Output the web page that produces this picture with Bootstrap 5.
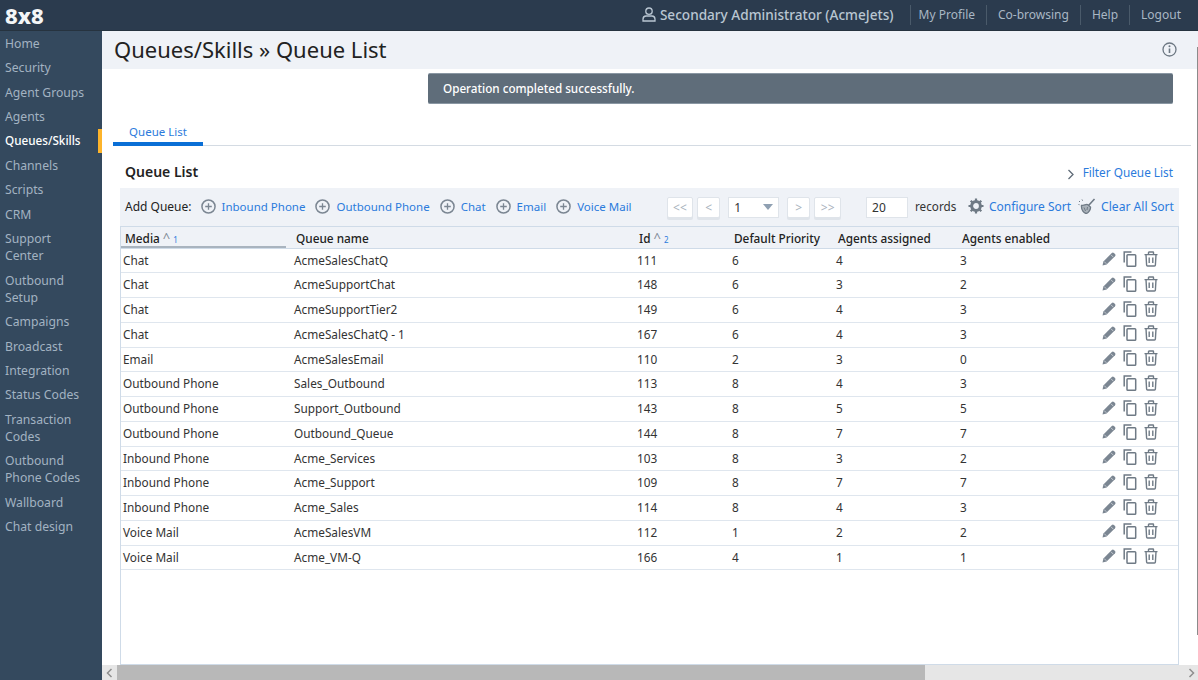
<!DOCTYPE html>
<html lang="en">

<head>
    <meta charset="UTF-8">
    <title>Queue List</title>
    <meta name="viewport" content="width=device-width, initial-scale=1">
    <link href="https://cdn.jsdelivr.net/npm/bootstrap@5.3.3/dist/css/bootstrap.min.css" rel="stylesheet">
    <style>
        html, body { height: 100%; overflow: hidden; }
        body { font-family: "Noto Sans", "Liberation Sans", sans-serif; font-size: 12px; color: #333; background: #fff; }
        a { text-decoration: none; color: #2b7bdc; }
        .shell { height: 680px; }
        .top-bar { height: 31px; padding: 0 17px 0 5px; background: #2b3b4e; border-bottom: 1px solid #26333f; }
        .logo-text { color: #f4f6f8; font-size: 22px; font-weight: 800; line-height: 30px; }
        .user-name { color: #b9c6d2; font-size: 13.6px; font-weight: 500; margin-right: 16px; }
        .top-link { color: #a9b7c4; font-size: 12px; padding: 0 11px; height: 20px; line-height: 20px; border-left: 1px solid #4a5a6a; }
        .top-link:first-of-type { padding-left: 8px; }
        .top-link:last-child { padding-right: 0; }
        .side-bar { width: 102px; flex: none; background: #34495e; }
        .side-link { display: block; color: #a3b3c2; font-size: 12.2px; line-height: 17px; padding: 3.72px 12px 3.72px 5px; }
        .side-link.current { color: #fff; font-size: 11.7px; font-weight: 500; padding-right: 0; border-right: 4px solid #fdb42b; }
        .title-bar { height: 38px; padding: 0 22px 2px 12px; background: #eff2f7; }
        .title-bar h1 { font-size: 22px; font-weight: 400; color: #222; margin: 0; }
        .work-area { min-height: 0; }
        .ok-alert { margin: 4px 26px 0 326px; height: 31px; padding: 0 15px; line-height: 28px; border: 0; border-top: 1px solid #8a97a3; border-bottom: 1px solid #8a97a3; border-radius: 2px; background: #5f6d7a; color: #fff; font-weight: 500; font-size: 11.7px; }
        .tab-row { margin: 21px 8px 0 11px; height: 21px; border-bottom: 1px solid #d4dbe3; }
        .tab-item { width: 90px; height: 21px; line-height: 14px; text-align: center; color: #2b7bdc; font-size: 11.5px; border-bottom: 4px solid #0a6fd6; }
        .list-head { margin: 16px 24px 0 23px; height: 26px; padding-bottom: 6px; }
        .list-head h2 { font-size: 14px; font-weight: 600; color: #222; margin: 0; }
        .filter-link { font-size: 11.8px; margin-right: 2px; position: relative; top: 1px; }
        .tool-bar { margin: 0 20px 0 18px; height: 38px; padding: 0 5px 0 5px; background: #eff2f7; white-space: nowrap; }
        .tool-label { color: #222; margin-right: 9px; }
        .tool-link { margin-right: 10px; font-size: 11.5px; }
        .tool-link svg { margin-right: 6px; vertical-align: -3px; }
        .pager { margin-left: 25px; }
        .page-btn { min-width: 23px; height: 21px; padding: 0 5.5px; font-size: 12px; line-height: 19px; color: #a8b2bc; background: #fff; border: 1px solid #dfe4ea; border-radius: 2px; box-shadow: 0 2px 0 #dfe4ea; }
        .page-pick { width: 51px; height: 21px; padding: 0 5px; line-height: 19px; background: #fff; border: 1px solid #dfe4ea; color: #333; }
        .page-pick i { border: 5px solid transparent; border-top: 6px solid #8fa0b2; border-bottom: 0; }
        .count-box { width: 42px; height: 21px; margin-left: 25px; margin-right: 7px; padding: 0 5px; font-size: 12px; line-height: 19px; border: 1px solid #dfe4ea; border-radius: 0; color: #333; }
        .count-label { font-size: 11.7px; }
        .side-tool svg { margin-right: 5px; vertical-align: -3px; }
        .clear-tool { font-size: 12.1px; margin-left: 7px; }
        .table-box { margin: 0 20px 0 18px; border: 1px solid #cfdbe8; overflow: hidden; }
        .queue-table { table-layout: fixed; width: 1057px; margin: 0; font-size: 11.8px; }
        .queue-table th { height: 21px; padding: 2px 0 0 4px; background: #eff2f7; color: #222; font-weight: 500; font-size: 11.8px; line-height: 16px; border-bottom: 1px solid #cfdbe8; vertical-align: middle; white-space: nowrap; }
        .queue-table td { height: 24.75px; padding: 0 0 0 2px; color: #333; border-bottom: 1px solid #dfe6ee; vertical-align: middle; white-space: nowrap; }
        .queue-table th.sort-on { box-shadow: inset -6px 0 0 #eff2f7, inset 0 -2px 0 #a9b4bf; }
        .sort-mark { color: #7f8b98; font-weight: 400; font-size: 13px; line-height: 12px; margin-left: 3px; position: relative; top: -1px; }
        .sort-num { color: #2b7bdc; font-weight: 400; font-size: 8px; line-height: 12px; margin-left: 3px; }
        .queue-table td.row-tools { padding-left: 10px; }
        .row-tools svg { margin-right: 5px; vertical-align: -2px; }
        .h-scroll { height: 15px; background: #e6e6e6; }
        .h-scroll b { width: 808px; height: 15px; background: #b8b8b8; }
        .scroll-end { width: 15px; color: #8e8e8e; }
        .v-thumb { position: absolute; right: 0; top: 47px; width: 1px; height: 588px; background: #8b8b8b; }
    </style>
</head>

<body>
    <svg width="0" height="0" class="position-absolute">
        <symbol id="ic-plus" viewBox="0 0 16 16"><circle cx="8" cy="8" r="7" fill="none" stroke="#7b8692" stroke-width="1.6"/><path d="M8 4.500v7M4.500 8h7" stroke="#7b8692" stroke-width="1.400"/></symbol>
        <symbol id="ic-pen" viewBox="0 0 16 16"><path d="M1.500 14.500l.9-4.100L10.800 2a1.500 1.500 0 0 1 2.100 0l1.100 1.100a1.500 1.500 0 0 1 0 2.100l-8.400 8.400z" fill="#7b8692"/><path d="M3.200 10.600l2.200 2.200M10 3.800l2.200 2.200" stroke="#d5dae0" stroke-width=".8"/></symbol>
        <symbol id="ic-copy" viewBox="0 0 16 16"><path d="M2.200 11.500V1h7.300" fill="none" stroke="#6f7a85" stroke-width="1.500"/><rect x="5" y="3.800" width="8.700" height="11.400" rx=".8" fill="none" stroke="#6f7a85" stroke-width="1.500"/></symbol>
        <symbol id="ic-trash" viewBox="0 0 16 16"><path d="M1.500 3.600h13M5.500 3.400V1.500c0-.3.2-.5.5-.5h4c.3 0 .5.2.5.5v1.900M3 3.800l.6 10.200c0 .6.4 1 1 1h6.800c.6 0 1-.4 1-1l.6-10.200M6.200 6.500v5.500M9.800 6.500v5.500" fill="none" stroke="#6f7a85" stroke-width="1.400"/></symbol>
    </svg>

    <div class="shell d-flex flex-column position-relative">
        <nav class="navbar top-bar flex-nowrap">
            <span class="logo-text">8x8</span>
            <div class="d-flex align-items-center">
                <svg width="14" height="15" viewBox="0 0 14 15" class="me-1"><circle cx="7" cy="4.200" r="3.200" fill="none" stroke="#b9c6d2" stroke-width="1.300"/><path d="M1 14v-1.800C1 10 2.600 9 4 9h6c1.400 0 3 1 3 3.200V14z" fill="none" stroke="#b9c6d2" stroke-width="1.300"/></svg>
                <span class="user-name">Secondary Administrator (AcmeJets)</span>
                <a class="top-link" href="#">My Profile</a>
                <a class="top-link" href="#">Co-browsing</a>
                <a class="top-link" href="#">Help</a>
                <a class="top-link" href="#">Logout</a>
            </div>
        </nav>

        <div class="d-flex flex-grow-1 work-area">
            <div class="side-bar">
                <a class="side-link" href="#">Home</a>
                <a class="side-link" href="#">Security</a>
                <a class="side-link" href="#">Agent Groups</a>
                <a class="side-link" href="#">Agents</a>
                <a class="side-link current" href="#">Queues/Skills</a>
                <a class="side-link" href="#">Channels</a>
                <a class="side-link" href="#">Scripts</a>
                <a class="side-link" href="#">CRM</a>
                <a class="side-link" href="#">Support Center</a>
                <a class="side-link" href="#">Outbound Setup</a>
                <a class="side-link" href="#">Campaigns</a>
                <a class="side-link" href="#">Broadcast</a>
                <a class="side-link" href="#">Integration</a>
                <a class="side-link" href="#">Status Codes</a>
                <a class="side-link" href="#">Transaction Codes</a>
                <a class="side-link" href="#">Outbound Phone Codes</a>
                <a class="side-link" href="#">Wallboard</a>
                <a class="side-link" href="#">Chat design</a>
            </div>

            <div class="d-flex flex-column flex-grow-1 work-area">
                <div class="title-bar d-flex justify-content-between align-items-center">
                    <h1>Queues/Skills » Queue List</h1>
                    <svg width="15" height="15" viewBox="0 0 15 15"><circle cx="7.500" cy="7.500" r="6.500" fill="none" stroke="#6d7883" stroke-width="1.300"/><path d="M7.500 6.500v4.500" stroke="#6d7883" stroke-width="1.600"/><circle cx="7.500" cy="4.300" r="1" fill="#6d7883"/></svg>
                </div>

                <div class="alert ok-alert" role="alert">Operation completed successfully.</div>

                <div class="tab-row d-flex"><div class="tab-item">Queue List</div></div>

                <div class="list-head d-flex justify-content-between align-items-center">
                    <h2>Queue List</h2>
                    <a class="filter-link" href="#"><svg width="8" height="11" viewBox="0 0 8 11" class="me-2"><path d="M1.500 1l4.500 4.500L1.500 10" fill="none" stroke="#5f6b77" stroke-width="1.300"/></svg>Filter Queue List</a>
                </div>

                <div class="tool-bar d-flex align-items-center">
                    <span class="tool-label">Add Queue:</span>
                    <a class="tool-link" href="#"><svg width="15" height="15"><use href="#ic-plus"/></svg>Inbound Phone</a>
                    <a class="tool-link" href="#"><svg width="15" height="15"><use href="#ic-plus"/></svg>Outbound Phone</a>
                    <a class="tool-link" href="#"><svg width="15" height="15"><use href="#ic-plus"/></svg>Chat</a>
                    <a class="tool-link" href="#"><svg width="15" height="15"><use href="#ic-plus"/></svg>Email</a>
                    <a class="tool-link" href="#"><svg width="15" height="15"><use href="#ic-plus"/></svg>Voice Mail</a>
                    <div class="pager d-flex align-items-center gap-1">
                        <button class="page-btn" type="button">&lt;&lt;</button>
                        <button class="page-btn" type="button">&lt;</button>
                        <div class="page-pick d-flex justify-content-between align-items-center mx-1"><span>1</span><i></i></div>
                        <button class="page-btn" type="button">&gt;</button>
                        <button class="page-btn" type="button">&gt;&gt;</button>
                    </div>
                    <input class="form-control count-box" value="20">
                    <span class="count-label">records</span>
                    <a class="side-tool ms-auto" href="#"><svg width="16" height="16" viewBox="0 0 16 16"><circle cx="8" cy="8" r="4.400" fill="none" stroke="#6f7a85" stroke-width="3"/><path d="M8 .5v3M8 12.500v3M.5 8h3M12.500 8h3M2.700 2.700l2.100 2.100M11.200 11.200l2.100 2.100M13.300 2.700l-2.100 2.100M4.800 11.200l-2.100 2.100" stroke="#6f7a85" stroke-width="2.200"/><circle cx="8" cy="8" r="1.500" fill="none" stroke="#eff2f7" stroke-width=".7"/></svg>Configure Sort</a>
                    <a class="side-tool clear-tool" href="#"><svg width="18" height="16" viewBox="0 0 18 16"><path d="M3.500 7.500c2.500 0 4.500-1.500 6-1l3 2.500c.3 2-1.500 5.500-4 6.500-2.500 0-5.500-3.500-5-8z" fill="#aab2ba" stroke="#6f7a85" stroke-width="1.300"/><path d="M16.500 1L10.500 7.500" stroke="#6f7a85" stroke-width="1.600"/><path d="M1 3l1 1M4 1.500l.6 1.200M.5 6.500l1 .2M6 9.500l1.500 3.500M9.500 9l-.5 3" stroke="#6f7a85" stroke-width="1"/></svg>Clear All Sort</a>
                </div>

                <div class="table-box flex-grow-1">
                    <table class="table queue-table">
                        <colgroup><col style="width:171px"><col style="width:343px"><col style="width:95px"><col style="width:104px"><col style="width:124px"><col style="width:133px"><col></colgroup>
                        <thead>
                            <tr><th class="sort-on">Media<span class="sort-mark">^</span><span class="sort-num">1</span></th><th>Queue name</th><th>Id<span class="sort-mark">^</span><span class="sort-num">2</span></th><th>Default Priority</th><th>Agents assigned</th><th>Agents enabled</th><th></th></tr>
                        </thead>
                        <tbody>
                            <tr><td>Chat</td><td>AcmeSalesChatQ</td><td>111</td><td>6</td><td>4</td><td>3</td><td class="row-tools"><svg width="16" height="16"><use href="#ic-pen"/></svg><svg width="16" height="16"><use href="#ic-copy"/></svg><svg width="16" height="16"><use href="#ic-trash"/></svg></td></tr>
                            <tr><td>Chat</td><td>AcmeSupportChat</td><td>148</td><td>6</td><td>3</td><td>2</td><td class="row-tools"><svg width="16" height="16"><use href="#ic-pen"/></svg><svg width="16" height="16"><use href="#ic-copy"/></svg><svg width="16" height="16"><use href="#ic-trash"/></svg></td></tr>
                            <tr><td>Chat</td><td>AcmeSupportTier2</td><td>149</td><td>6</td><td>4</td><td>3</td><td class="row-tools"><svg width="16" height="16"><use href="#ic-pen"/></svg><svg width="16" height="16"><use href="#ic-copy"/></svg><svg width="16" height="16"><use href="#ic-trash"/></svg></td></tr>
                            <tr><td>Chat</td><td>AcmeSalesChatQ - 1</td><td>167</td><td>6</td><td>4</td><td>3</td><td class="row-tools"><svg width="16" height="16"><use href="#ic-pen"/></svg><svg width="16" height="16"><use href="#ic-copy"/></svg><svg width="16" height="16"><use href="#ic-trash"/></svg></td></tr>
                            <tr><td>Email</td><td>AcmeSalesEmail</td><td>110</td><td>2</td><td>3</td><td>0</td><td class="row-tools"><svg width="16" height="16"><use href="#ic-pen"/></svg><svg width="16" height="16"><use href="#ic-copy"/></svg><svg width="16" height="16"><use href="#ic-trash"/></svg></td></tr>
                            <tr><td>Outbound Phone</td><td>Sales_Outbound</td><td>113</td><td>8</td><td>4</td><td>3</td><td class="row-tools"><svg width="16" height="16"><use href="#ic-pen"/></svg><svg width="16" height="16"><use href="#ic-copy"/></svg><svg width="16" height="16"><use href="#ic-trash"/></svg></td></tr>
                            <tr><td>Outbound Phone</td><td>Support_Outbound</td><td>143</td><td>8</td><td>5</td><td>5</td><td class="row-tools"><svg width="16" height="16"><use href="#ic-pen"/></svg><svg width="16" height="16"><use href="#ic-copy"/></svg><svg width="16" height="16"><use href="#ic-trash"/></svg></td></tr>
                            <tr><td>Outbound Phone</td><td>Outbound_Queue</td><td>144</td><td>8</td><td>7</td><td>7</td><td class="row-tools"><svg width="16" height="16"><use href="#ic-pen"/></svg><svg width="16" height="16"><use href="#ic-copy"/></svg><svg width="16" height="16"><use href="#ic-trash"/></svg></td></tr>
                            <tr><td>Inbound Phone</td><td>Acme_Services</td><td>103</td><td>8</td><td>3</td><td>2</td><td class="row-tools"><svg width="16" height="16"><use href="#ic-pen"/></svg><svg width="16" height="16"><use href="#ic-copy"/></svg><svg width="16" height="16"><use href="#ic-trash"/></svg></td></tr>
                            <tr><td>Inbound Phone</td><td>Acme_Support</td><td>109</td><td>8</td><td>7</td><td>7</td><td class="row-tools"><svg width="16" height="16"><use href="#ic-pen"/></svg><svg width="16" height="16"><use href="#ic-copy"/></svg><svg width="16" height="16"><use href="#ic-trash"/></svg></td></tr>
                            <tr><td>Inbound Phone</td><td>Acme_Sales</td><td>114</td><td>8</td><td>4</td><td>3</td><td class="row-tools"><svg width="16" height="16"><use href="#ic-pen"/></svg><svg width="16" height="16"><use href="#ic-copy"/></svg><svg width="16" height="16"><use href="#ic-trash"/></svg></td></tr>
                            <tr><td>Voice Mail</td><td>AcmeSalesVM</td><td>112</td><td>1</td><td>2</td><td>2</td><td class="row-tools"><svg width="16" height="16"><use href="#ic-pen"/></svg><svg width="16" height="16"><use href="#ic-copy"/></svg><svg width="16" height="16"><use href="#ic-trash"/></svg></td></tr>
                            <tr><td>Voice Mail</td><td>Acme_VM-Q</td><td>166</td><td>4</td><td>1</td><td>1</td><td class="row-tools"><svg width="16" height="16"><use href="#ic-pen"/></svg><svg width="16" height="16"><use href="#ic-copy"/></svg><svg width="16" height="16"><use href="#ic-trash"/></svg></td></tr>
                        </tbody>
                    </table>
                </div>

                <div class="h-scroll d-flex align-items-center">
                    <div class="scroll-end d-flex justify-content-center"><svg width="7" height="10" viewBox="0 0 7 10"><path d="M5.500 1L1.500 5l4 4" fill="none" stroke="#8e8e8e" stroke-width="1.500"/></svg></div>
                    <b class="d-block"></b>
                    <div class="scroll-end d-flex justify-content-center ms-auto"><svg width="7" height="10" viewBox="0 0 7 10"><path d="M1.500 1l4 4-4 4" fill="none" stroke="#8e8e8e" stroke-width="1.500"/></svg></div>
                </div>
            </div>
        </div>
        <div class="v-thumb"></div>
    </div>

    <script src="https://cdn.jsdelivr.net/npm/bootstrap@5.3.3/dist/js/bootstrap.bundle.min.js"></script>
</body>

</html>
